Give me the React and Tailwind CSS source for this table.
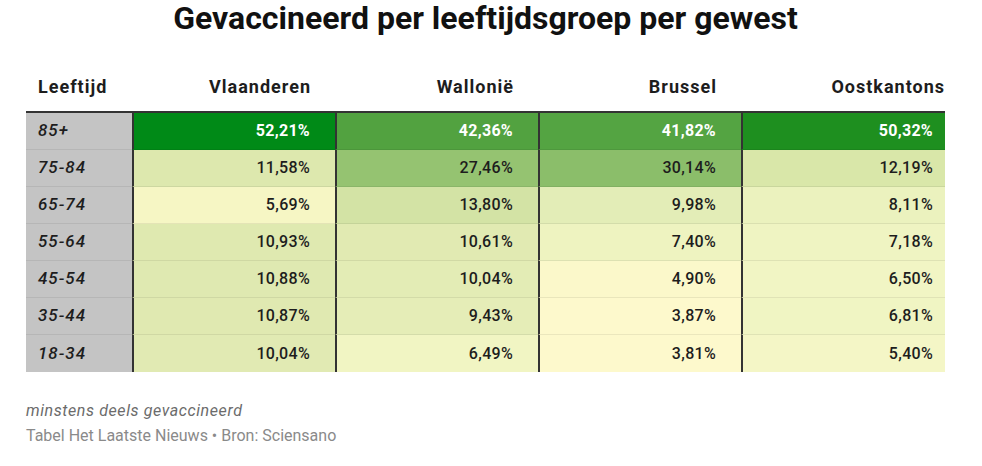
import React from "react";

const columns = ["Vlaanderen", "Wallonië", "Brussel", "Oostkantons"];

const rows = [
  {
    age: "85+",
    cells: [
      { v: "52,21%", bg: "bg-[#008a17]", light: true },
      { v: "42,36%", bg: "bg-[#52a240]", light: true },
      { v: "41,82%", bg: "bg-[#54a442]", light: true },
      { v: "50,32%", bg: "bg-[#1e8f1f]", light: true },
    ],
  },
  {
    age: "75-84",
    cells: [
      { v: "11,58%", bg: "bg-[#dde8ae]" },
      { v: "27,46%", bg: "bg-[#95c371]" },
      { v: "30,14%", bg: "bg-[#8bbe6a]" },
      { v: "12,19%", bg: "bg-[#d9e7a9]" },
    ],
  },
  {
    age: "65-74",
    cells: [
      { v: "5,69%", bg: "bg-[#f6f6c4]" },
      { v: "13,80%", bg: "bg-[#d3e3a5]" },
      { v: "9,98%", bg: "bg-[#e3edb7]" },
      { v: "8,11%", bg: "bg-[#ebf2be]" },
    ],
  },
  {
    age: "55-64",
    cells: [
      { v: "10,93%", bg: "bg-[#dfe9b0]" },
      { v: "10,61%", bg: "bg-[#e1eab2]" },
      { v: "7,40%", bg: "bg-[#eef3c0]" },
      { v: "7,18%", bg: "bg-[#eff4c2]" },
    ],
  },
  {
    age: "45-54",
    cells: [
      { v: "10,88%", bg: "bg-[#dfe9b1]" },
      { v: "10,04%", bg: "bg-[#e3ecb5]" },
      { v: "4,90%", bg: "bg-[#fbf8ca]" },
      { v: "6,50%", bg: "bg-[#f1f5c4]" },
    ],
  },
  {
    age: "35-44",
    cells: [
      { v: "10,87%", bg: "bg-[#e0e9b1]" },
      { v: "9,43%", bg: "bg-[#e5edb7]" },
      { v: "3,87%", bg: "bg-[#fdf9cc]" },
      { v: "6,81%", bg: "bg-[#f0f5c3]" },
    ],
  },
  {
    age: "18-34",
    cells: [
      { v: "10,04%", bg: "bg-[#e1eab3]" },
      { v: "6,49%", bg: "bg-[#f1f5c3]" },
      { v: "3,81%", bg: "bg-[#fdf9cc]" },
      { v: "5,40%", bg: "bg-[#f4f6c6]" },
    ],
  },
];

const grid = "grid grid-cols-[106px_203px_203px_203px_204px]";

export default function App() {
  return (
    <div className="w-[982px] h-[466px] bg-white font-['Roboto',sans-serif] text-[#1d1d1d]">
      <div className="w-[919px] ml-[26px]">
        <h1 className="h-[44px] text-center text-[32px] font-bold leading-[36px] text-[#111]">
          Gevaccineerd per leeftijdsgroep per gewest
        </h1>

        <div className={`${grid} h-[67px] items-end pb-[13px] text-[18px] font-bold leading-[22px] tracking-[1px]`}>
          <div className="pl-3">Leeftijd</div>
          {columns.map((c, i) => (
            <div key={c} className={`text-right ${i === 3 ? "pr-0" : "pr-[24px]"}`}>
              {c}
            </div>
          ))}
        </div>

        <div className="border-t-[2px] border-[#333]">
          {rows.map((r, ri) => {
            const line = ri < rows.length - 1 ? "border-b border-b-black/[0.07]" : "";
            return (
              <div key={r.age} className={`${grid} h-[37px] text-[16px] font-medium tracking-[0.3px]`}>
                <div className={`flex items-center bg-[#c4c4c4] pl-3 text-[17px] italic tracking-[1px] ${line}`}>
                  {r.age}
                </div>
                {r.cells.map((c, ci) => (
                  <div
                    key={ci}
                    className={`flex items-center justify-end border-l-2 border-l-[#333] ${c.bg} ${line} ${ci === 3 ? "pr-3" : "pr-[25px]"} ${c.light ? "text-white font-bold" : ""}`}
                  >
                    {c.v}
                  </div>
                ))}
              </div>
            );
          })}
        </div>

        <div className="mt-[29px] text-[16px] italic leading-[20px] tracking-[0.6px] text-[#6b6b6b]">
          minstens deels gevaccineerd
        </div>
        <div className="mt-[6px] text-[16px] leading-[18px] text-[#8a8a8a]">
          Tabel Het Laatste Nieuws • Bron: Sciensano
        </div>
      </div>
    </div>
  );
}
